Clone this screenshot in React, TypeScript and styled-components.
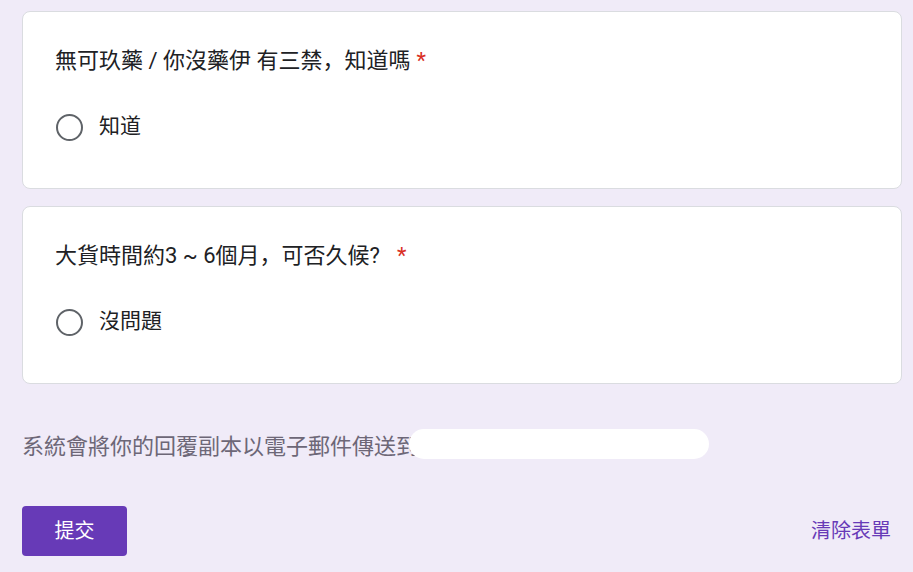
import React from 'react';
import styled, { createGlobalStyle } from 'styled-components';

const GlobalStyle = createGlobalStyle`
    html, body {
        margin: 0;
        padding: 0;
        background: #f0ebf8;
    }
    body {
        font-family: Roboto, "Noto Sans CJK SC", "Noto Sans CJK TC", sans-serif;
        color: #202124;
    }
`;

const Page = styled.div`
    width: 913px;
    height: 572px;
    padding: 11px 11px 0 22px;
    box-sizing: border-box;
    display: flex;
    flex-direction: column;
    overflow: hidden;
`;

const Card = styled.div`
    width: 880px;
    height: 178px;
    flex-shrink: 0;
    box-sizing: border-box;
    background: #fff;
    border: 1px solid #dadce0;
    border-radius: 8px;
    padding: 35px 32px 0 32px;
    & + & {
        margin-top: 17px;
    }
`;

const Title = styled.div`
    font-size: 22px;
    line-height: 28px;
    height: 28px;
    white-space: pre;
`;

const Required = styled.span`
    color: #d93025;
    margin-left: ${p => p.$gap}px;
`;

const Option = styled.label`
    display: flex;
    align-items: center;
    height: 40px;
    margin-top: 32px;
    font-size: 21px;
    line-height: 28px;
`;

const Radio = styled.span`
    width: 27px;
    height: 27px;
    box-sizing: border-box;
    border: 2.5px solid #5f6368;
    border-radius: 50%;
    margin-left: 1px;
    margin-right: 16px;
    flex-shrink: 0;
`;

const OptionText = styled.span`
    margin-bottom: 2px;
`;

const Notice = styled.div`
    display: flex;
    align-items: center;
    margin-top: 45px;
    height: 30px;
    font-size: 22px;
    color: #6d6777;
    white-space: nowrap;
`;

const Masked = styled.span`
    display: inline-block;
    width: 300px;
    height: 30px;
    flex-shrink: 0;
    background: #fff;
    border-radius: 15px;
    margin-left: -9px;
`;

const Actions = styled.div`
    display: flex;
    align-items: center;
    justify-content: space-between;
    width: 880px;
    margin-top: 47px;
`;

const Submit = styled.button`
    width: 105px;
    height: 50px;
    border: none;
    border-radius: 4px;
    background: #673ab7;
    color: #fff;
    font-family: inherit;
    font-size: 20px;
    padding: 0 0 3px;
    cursor: pointer;
`;

const Clear = styled.button`
    border: none;
    background: none;
    padding: 0 0 3px;
    margin-right: 11px;
    color: #673ab7;
    font-family: inherit;
    font-size: 20px;
    cursor: pointer;
`;

const questions = [
    { title: '無可玖藥 / 你沒藥伊 有三禁，知道嗎', gap: 6, option: '知道' },
    { title: '大貨時間約3 ~ 6個月，可否久候?', gap: 17, option: '沒問題' },
];

const App = () => {
    return (
        <Page>
            <GlobalStyle />
            {questions.map(q => (
                <Card key={q.title}>
                    <Title>
                        {q.title}
                        <Required $gap={q.gap}>*</Required>
                    </Title>
                    <Option>
                        <Radio />
                        <OptionText>{q.option}</OptionText>
                    </Option>
                </Card>
            ))}
            <Notice>
                系統會將你的回覆副本以電子郵件傳送到
                <Masked />
            </Notice>
            <Actions>
                <Submit>提交</Submit>
                <Clear>清除表單</Clear>
            </Actions>
        </Page>
    );
};

export default App;
